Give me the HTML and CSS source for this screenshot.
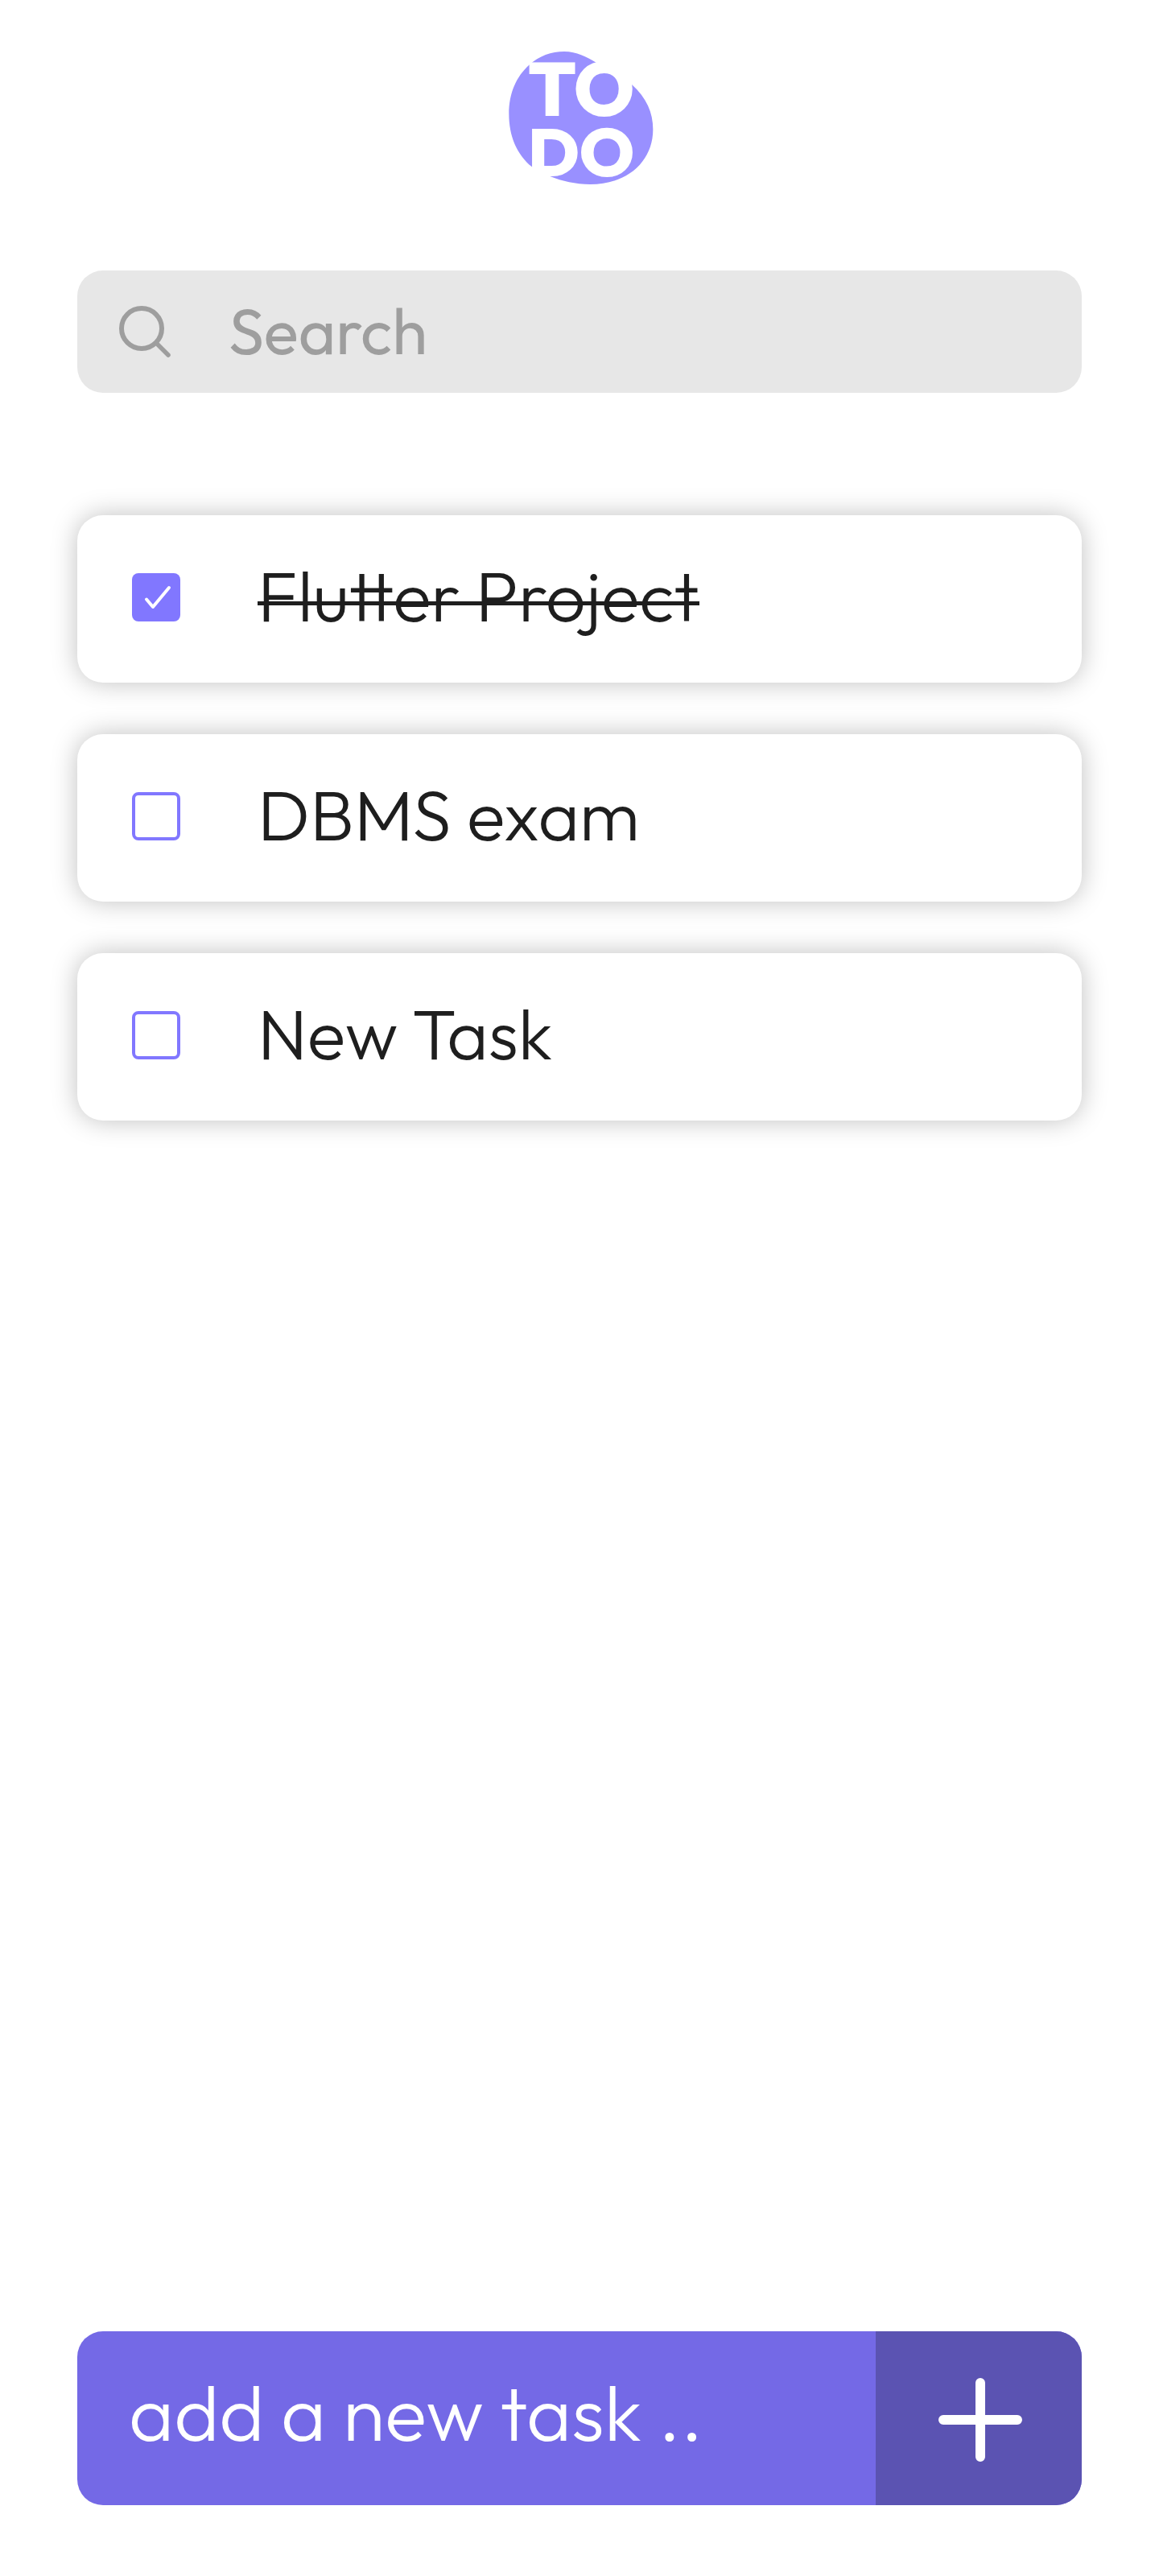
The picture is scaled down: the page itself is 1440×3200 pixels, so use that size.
FILE: index.html
```html
<!DOCTYPE html>
<html lang="en">
<head>
<meta charset="utf-8">
<title>To do</title>
<link rel="stylesheet" href="styles.css">
</head>
<body>
<main class="app">
  <header class="header">
    <svg class="logo" viewBox="0 0 720 630" role="img" aria-label="TO DO">
      <path class="logo-blob" d="M303 72C350 72 385 92 422 113C474 136 520 160 555 195C610 245 634 300 634 362C634 480 540 567 400 567C345 567 295 555 252 538C225 527 205 518 183 502C125 455 97 385 97 305C97 225 125 165 172 122C210 88 255 72 303 72Z"/>
      <g class="logo-text">
        <text x="168" y="311" font-size="280" textLength="397" lengthAdjust="spacingAndGlyphs">TO</text>
        <text x="167" y="538" font-size="250" textLength="398" lengthAdjust="spacingAndGlyphs">DO</text>
      </g>
    </svg>
  </header>
  <div class="search">
    <svg class="search-icon" viewBox="0 0 68 68"><circle cx="30" cy="30" r="25"/><path d="M48.5 48.5 63 63"/></svg>
    <span class="search-label">Search</span>
  </div>
  <ul class="tasks">
    <li class="task">
      <span class="checkbox checked"><svg viewBox="0 0 60 60"><path d="M18 32.5 26 42 46 18"/></svg></span>
      <span class="task-title done">Flutter Project</span>
    </li>
    <li class="task">
      <span class="checkbox"></span>
      <span class="task-title">DBMS exam</span>
    </li>
    <li class="task">
      <span class="checkbox"></span>
      <span class="task-title">New Task</span>
    </li>
  </ul>
  <footer class="composer">
    <span class="composer-label">add a new task ..</span>
    <span class="add"><svg viewBox="0 0 104 104"><path d="M52 6V98M6 52H98"/></svg></span>
  </footer>
</main>
</body>
</html>
```
FILE: styles.css
```css
* { box-sizing: border-box; }
body {
  margin: 0;
  background: #fff;
  font-family: Outfit, Inter, Lato, sans-serif;
  font-weight: 300;
  white-space: nowrap;
}
.app {
  display: flex;
  flex-direction: column;
  height: 3200px;
  padding: 40px 96px 88px;
}
.header { display: flex; justify-content: center; height: 296px; }
.logo { width: 240px; height: 210px; }
.logo-blob { fill: #9990ff; }
.logo-text { fill: #fff; font-weight: 800; }
.search {
  display: flex;
  align-items: center;
  height: 152px;
  padding-left: 50px;
  border-radius: 32px;
  background: #e7e7e7;
  color: #9e9e9e;
}
.search-icon { width: 68px; height: 68px; margin-right: 70px; fill: none; stroke: #9e9e9e; stroke-width: 6; }
.search-icon path { stroke-linecap: round; stroke-width: 5.5; }
.search-label { padding-bottom: 3px; font-size: 80px; font-weight: 400; }
.tasks {
  display: flex;
  flex-direction: column;
  gap: 64px;
  margin: 152px 0 0;
  padding: 0;
  list-style: none;
}
.task {
  display: flex;
  align-items: center;
  height: 208px;
  padding: 0 0 4px 68px;
  border-radius: 32px;
  background: #fff;
  box-shadow: 0 0 32px rgba(0, 0, 0, .25);
}
.checkbox { width: 60px; height: 60px; margin-right: 96px; border: 4px solid #8177ff; border-radius: 8px; }
.checked { border: 0; background: #8177ff; }
.checked svg { display: block; fill: none; stroke: #fff; stroke-width: 4; stroke-linecap: round; stroke-linejoin: round; }
.task-title { padding-bottom: 5px; color: #1e1e1e; font-size: 88px; }
.done { background: linear-gradient(#1e1e1e, #1e1e1e) 0 63px / 100% 5px no-repeat; }
.composer {
  display: flex;
  height: 216px;
  margin-top: auto;
  overflow: hidden;
  border-radius: 32px;
  background: #7469e6;
  color: #fff;
}
.composer-label { flex: 1; padding-left: 64px; font-size: 96px; line-height: 201px; }
.add { display: flex; width: 256px; padding: 58px 0 0 78px; background: #5b53b2; }
.add svg { width: 104px; height: 104px; stroke: #fff; stroke-width: 12; stroke-linecap: round; }
```
